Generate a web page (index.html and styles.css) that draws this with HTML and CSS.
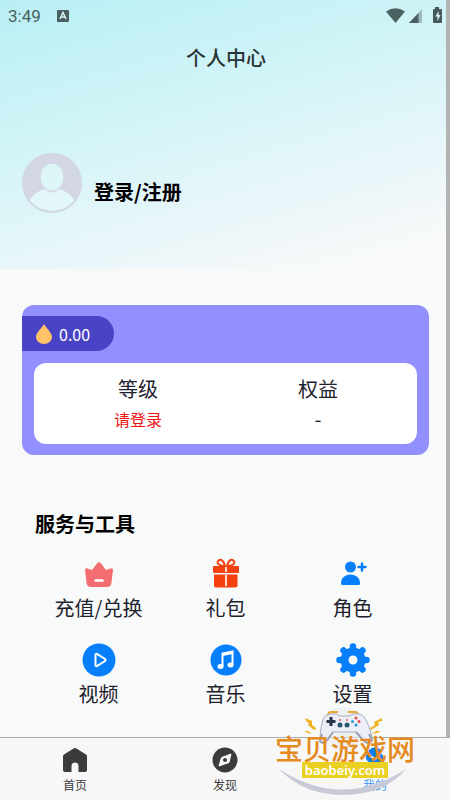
FILE: index.html
```html
<!DOCTYPE html>
<html lang="zh-CN">
<head>
<meta charset="utf-8">
<meta name="viewport" content="width=device-width, initial-scale=1">
<title>个人中心</title>
<link rel="stylesheet" href="styles.css">
</head>
<body>
<div class="app">
  <main class="screen">
    <header class="hero">
      <div class="status">
        <span>3:49</span>
        <svg class="status-app" width="12" height="14" viewBox="0 0 12 14"><rect y="1" width="12" height="12" rx="1" fill="#48605f"/><path d="M3 10 6 3.500 9 10M4 8h4" fill="none" stroke="#d8f5f6" stroke-width="1.500"/></svg>
        <span class="status-right">
          <svg width="56" height="18" viewBox="0 0 56 18">
            <path d="M0 4.500Q9.500-2 19 4.500L9.500 16Z" fill="#4b6161"/>
            <path d="M36 2v14H23Z" fill="#9dbbbd"/><path d="M32.500 6v10H23Z" fill="#4b6161"/>
            <path d="M49 2V0h4v2h2q1 0 1 1v12q0 1-1 1h-7q-1 0-1-1V3q0-1 1-1Z" fill="#46585a"/>
            <path d="m52.500 4-3 5.500h2v4.500l3-6h-2Z" fill="#e1f7f8"/>
          </svg>
        </span>
      </div>
      <h1 class="title">个人中心</h1>
      <a class="profile" href="#login">
        <svg width="60" height="60" viewBox="0 0 60 60">
          <circle cx="30" cy="30" r="30" fill="#d3d6e4"/>
          <path d="M7.500 47C12 41 17 37 23 36.500Q30 42.500 37 36.500C43 37 48 41 52.500 47A29 29 0 0 1 7.500 47Z" fill="#e3f6f8"/>
          <ellipse cx="30" cy="24" rx="12" ry="14" fill="#def5f7" stroke="#d3d6e4" stroke-width="1"/>
        </svg>
        <span class="profile-name">登录/注册</span>
      </a>
    </header>

    <section class="card">
      <div class="balance">
        <svg width="16" height="20" viewBox="0 0 16 20"><path d="M8 0C10 4 16 8.500 16 13A8 7 0 0 1 0 13C0 8.500 6 4 8 0Z" fill="#ffc268"/></svg>
        <span>0.00</span>
      </div>
      <div class="panel">
        <div class="stat"><span class="stat-name">等级</span><span class="stat-value alert">请登录</span></div>
        <div class="stat"><span class="stat-name">权益</span><span class="stat-value empty">-</span></div>
      </div>
    </section>

    <section class="services">
      <h2 class="services-title">服务与工具</h2>
      <div class="grid">
        <a class="tool" href="#recharge">
          <svg width="34" height="34" viewBox="0 0 34 34"><path d="M4.500 25.500 3 13Q3 10.500 5.500 11.500L10 13 15 6.500Q17 4 19 6.500L24 13 28.500 11.500Q31 10.500 31 13L29.500 25.500Q29 30 25 30H9Q5 30 4.500 25.500Z" fill="#f46d70"/><path d="M13.500 23.500h7" stroke="#fff" stroke-width="2.500" stroke-linecap="round"/></svg>
          <span>充值/兑换</span>
        </a>
        <a class="tool" href="#gifts">
          <svg width="34" height="34" viewBox="0 0 34 34"><path d="M16 9C15 4 12 1.500 9.500 3.500C7 6 10 9 16 9ZM18 9C19 4 22 1.500 24.500 3.500C27 6 24 9 18 9Z" fill="none" stroke="#f5410f" stroke-width="2"/><rect x="4" y="9" width="26" height="7" rx="1" fill="#f5410f"/><path d="M5 17.500h23.500V28.500q0 2-2 2H7q-2 0-2-2Z" fill="#f5410f"/><path d="M17 10v5M17 18v11" stroke="#ffd9c9" stroke-width="2"/></svg>
          <span>礼包</span>
        </a>
        <a class="tool" href="#roles">
          <svg width="34" height="34" viewBox="0 0 34 34"><g fill="#087ffa"><circle cx="14.500" cy="10" r="5.500"/><path d="M5 26.500C5 21 9 17.500 14.500 17.500S24 21 24 26.500Q24 28 22.500 28H6.500Q5 28 5 26.500Z"/></g><path d="M26 6.500v7M22.500 10h7" stroke="#087ffa" stroke-width="2.500" stroke-linecap="round"/></svg>
          <span>角色</span>
        </a>
        <a class="tool" href="#video">
          <svg width="34" height="34" viewBox="0 0 34 34"><circle cx="17" cy="17" r="16.500" fill="#087ffa"/><path d="M13.500 12v10q0 1.500 1.500 1l8-5q1-1 0-2l-8-5q-1.500-.5-1.500 1Z" fill="none" stroke="#fff" stroke-width="2"/></svg>
          <span>视频</span>
        </a>
        <a class="tool" href="#music">
          <svg width="34" height="34" viewBox="0 0 34 34"><circle cx="17" cy="17" r="15.500" fill="#087ffa"/><g fill="#fff"><ellipse cx="11.500" cy="23.500" rx="3" ry="2.500"/><ellipse cx="21.500" cy="22" rx="3" ry="2.500"/></g><path d="M13.500 23.500V10.500L23.500 8.500V22M13.500 12 23.500 10" fill="none" stroke="#fff" stroke-width="2"/></svg>
          <span>音乐</span>
        </a>
        <a class="tool" href="#settings">
          <svg width="34" height="34" viewBox="0 0 34 34"><g fill="none" stroke="#087ffa" stroke-linecap="round"><circle cx="17" cy="17" r="8.500" stroke-width="8"/><path d="M17 3.500v4M17 26.500v4M3.500 17h4M26.500 17h4M7.500 7.500l3 3M23.500 23.500l3 3M7.500 26.500l3-3M23.500 10.500l3-3" stroke-width="6.500"/></g></svg>
          <span>设置</span>
        </a>
      </div>
    </section>
  </main>

  <footer class="footer">
    <nav class="tabs">
      <a class="tab" href="#home">
        <svg width="26" height="26" viewBox="0 0 26 26"><path d="M11.500 1.500Q13 .5 14.500 1.500L24 7.500Q25 8 25 9.500V23q0 2-2 2h-6.500v-6a3.500 3.500 0 0 0-7 0v6H3q-2 0-2-2V9.500Q1 8 2 7.500Z" fill="#3b3b3b"/></svg>
        <span>首页</span>
      </a>
      <a class="tab" href="#discover">
        <svg width="26" height="26" viewBox="0 0 26 26"><circle cx="13" cy="13" r="12.500" fill="#3b3b3b"/><path d="M19 7 17 15.500 7 19 9.500 10.500Z" fill="#f7f7f7" stroke="#f7f7f7" stroke-linejoin="round"/><circle cx="13" cy="13" r="2" fill="#3b3b3b"/></svg>
        <span>发现</span>
      </a>
      <a class="tab active" href="#me">
        <svg width="26" height="26" viewBox="0 0 26 26"><path d="M7 3Q12 -2 18 2L20 8H5ZM4 8h17v4q-2 5-8 5t-9-5Z" fill="#087ffa"/><path d="M9 9q4 5 8 0" fill="none" stroke="#eef5ff" stroke-width="2"/></svg>
        <span>我的</span>
      </a>
    </nav>
    <div class="brand">
      <svg class="brand-art" width="140" height="94" viewBox="0 0 140 94">
        <circle cx="69" cy="23" r="22" fill="#e9ebea" opacity=".6"/>
        <path d="M5 63Q68 104 132 63Q110 89 69 89Q30 89 5 63Z" fill="#c9cad8"/>
        <g>
        <path d="M54 10q0-4 3-4h7M74 6h7q3 0 3 4" fill="none" stroke="#e6a92d" stroke-width="2"/>
        <path d="M51 10Q55 7 62 8L66 10H75L79 8Q87 7 90 11C94 16 99 31 98 35Q95 40 90 35L82 26H59L53 35Q46 40 46 33C46 27 48 13 51 10Z" fill="#eceef5" stroke="#a9acc0"/>
        <path d="M48 28 46 35Q48 39 54 33L59 26M82 26 90 35Q95 39 98 34L95 28" fill="none" stroke="#9b9eb2" stroke-width="2"/>
        <path d="M57 11v9M52.500 15.500h9" stroke="#29314a" stroke-width="3"/>
        <g fill="#28566f"><circle cx="66" cy="19" r="2.500"/><circle cx="73" cy="19" r="2.500"/></g>
        <g fill="#e74c58"><circle cx="82" cy="12" r="1.500"/><circle cx="85" cy="15.500" r="1.500"/><circle cx="66" cy="14" r="1"/><circle cx="73" cy="14" r="1"/></g>
        <g fill="#269bd0"><circle cx="78.500" cy="15.500" r="1.500"/><circle cx="82" cy="19" r="1.500"/></g>
        <g fill="#efb21e"><path d="m31 12 7 3v4l4 3 0 2-2-1 0 1-6-5 1-2-3-2ZM108 12l-8 4 1 3-5 3 1 2 8-5-1-3 4-1ZM30 25l4 0 4 3-4-1ZM107 25l-5 0-4 3 5-1Z"/></g>
        </g>
      </svg>
      <span class="brand-name">宝贝游戏网</span>
      <span class="brand-url">baobeiy.com</span>
    </div>
  </footer>
</div>
</body>
</html>
```

FILE: styles.css
```css
* {
  box-sizing: border-box;
}

body {
  margin: 0;
  background: #f8faf9;
  color: #1e222e;
  font-family: "Noto Sans CJK SC", "Noto Sans", sans-serif;
}

a {
  color: inherit;
  text-decoration: none;
}

svg {
  display: block;
  flex: none;
}

.app {
  display: flex;
  flex-direction: column;
  min-height: 100vh;
}

.screen {
  flex: 1;
  border-right: 4px solid #b2b4b4;
}

.hero {
  padding-bottom: 56px;
  background: linear-gradient(164deg, #b8eff4 0%, #d3f4f7 40%, #f0f7fa 80%, #f8faf9 92%);
}

.status {
  display: flex;
  align-items: center;
  height: 32px;
  padding: 0 4px 0 8px;
  color: #48605f;
  font: 400 17px/32px Roboto, sans-serif;
}

.status-app {
  margin-left: 16px;
}

.status-right {
  margin-left: auto;
}

.title {
  margin: 11px 0 0;
  padding-left: 6px;
  color: #283335;
  font-size: 20px;
  font-weight: 500;
  line-height: 30px;
  text-align: center;
}

.profile {
  display: flex;
  align-items: center;
  gap: 12px;
  margin: 80px 22px 0;
}

.profile-name {
  padding-top: 18px;
  color: #000;
  font-size: 20px;
  font-weight: 700;
  line-height: 30px;
}

.card {
  margin: 36px 17px 0 22px;
  padding: 11px 12px 11px 0;
  border-radius: 12px;
  background: #928fff;
}

.balance {
  display: flex;
  align-items: center;
  gap: 7px;
  width: 92px;
  height: 35px;
  padding-left: 14px;
  border-radius: 0 18px 18px 0;
  background: #4943c5;
  color: #fff;
  font-size: 16px;
}

.panel {
  display: grid;
  grid-template-columns: 1fr 1fr;
  margin: 12px 0 0 12px;
  padding: 11px 9px 10px 14px;
  border-radius: 12px;
  background: #fff;
}

.stat {
  display: flex;
  flex-direction: column;
  align-items: center;
}

.stat-name {
  font-size: 20px;
  line-height: 30px;
}

.stat-value {
  font-size: 16px;
  line-height: 30px;
}

.alert {
  color: #ee1313;
}

.empty {
  font-size: 20px;
}

.services {
  padding: 54px 30px 24px 35px;
}

.services-title {
  margin: 0;
  color: #000;
  font-size: 20px;
  font-weight: 700;
  line-height: 30px;
}

.grid {
  display: grid;
  grid-template-columns: repeat(3, 1fr);
  row-gap: 18px;
  margin-top: 18px;
}

.tool {
  display: flex;
  flex-direction: column;
  align-items: center;
  font-size: 20px;
  line-height: 34px;
}

.footer {
  position: relative;
  border-top: 1px solid #ababab;
  background: #f7f7f7;
}

.tabs {
  display: grid;
  grid-template-columns: repeat(3, 1fr);
}

.tab {
  display: flex;
  flex-direction: column;
  align-items: center;
  gap: 3px;
  padding: 9px 0 6px;
  color: #3b3b3b;
  font-size: 12px;
  line-height: 18px;
}

.active {
  color: #3797f2;
}

.brand {
  position: absolute;
  right: 34px;
  bottom: 0;
  display: flex;
  flex-direction: column;
  align-items: center;
  width: 142px;
}

.brand-art {
  position: absolute;
  bottom: 0;
  left: 0;
}

.brand-name {
  position: relative;
  color: #e58a20;
  font-size: 28px;
  line-height: 28px;
  font-weight: 500;
  white-space: nowrap;
}

.brand-url {
  position: relative;
  margin: 0 0 22px;
  padding: 0 3px;
  background: #ead021;
  color: #fff;
  font: 600 13px/16px "Noto Sans", sans-serif;
}
```
